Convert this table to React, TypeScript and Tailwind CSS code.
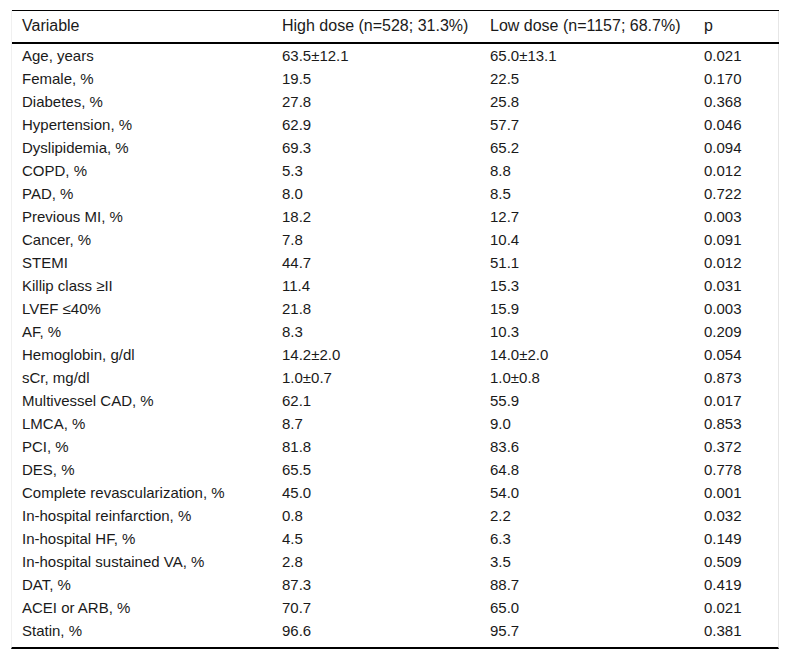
const rows: [string, string, string, string][] = [
  ['Age, years', '63.5±12.1', '65.0±13.1', '0.021'],
  ['Female, %', '19.5', '22.5', '0.170'],
  ['Diabetes, %', '27.8', '25.8', '0.368'],
  ['Hypertension, %', '62.9', '57.7', '0.046'],
  ['Dyslipidemia, %', '69.3', '65.2', '0.094'],
  ['COPD, %', '5.3', '8.8', '0.012'],
  ['PAD, %', '8.0', '8.5', '0.722'],
  ['Previous MI, %', '18.2', '12.7', '0.003'],
  ['Cancer, %', '7.8', '10.4', '0.091'],
  ['STEMI', '44.7', '51.1', '0.012'],
  ['Killip class ≥II', '11.4', '15.3', '0.031'],
  ['LVEF ≤40%', '21.8', '15.9', '0.003'],
  ['AF, %', '8.3', '10.3', '0.209'],
  ['Hemoglobin, g/dl', '14.2±2.0', '14.0±2.0', '0.054'],
  ['sCr, mg/dl', '1.0±0.7', '1.0±0.8', '0.873'],
  ['Multivessel CAD, %', '62.1', '55.9', '0.017'],
  ['LMCA, %', '8.7', '9.0', '0.853'],
  ['PCI, %', '81.8', '83.6', '0.372'],
  ['DES, %', '65.5', '64.8', '0.778'],
  ['Complete revascularization, %', '45.0', '54.0', '0.001'],
  ['In-hospital reinfarction, %', '0.8', '2.2', '0.032'],
  ['In-hospital HF, %', '4.5', '6.3', '0.149'],
  ['In-hospital sustained VA, %', '2.8', '3.5', '0.509'],
  ['DAT, %', '87.3', '88.7', '0.419'],
  ['ACEI or ARB, %', '70.7', '65.0', '0.021'],
  ['Statin, %', '96.6', '95.7', '0.381'],
];

export default function App() {
  return (
    <div className="min-h-screen bg-white pt-[10px] pl-[11px]" style={{ fontFamily: '"Liberation Sans", Arial, sans-serif' }}>
      <div className="w-[768px] border-r border-[#e6e6e6] border-l pb-[5px] border-b-2 border-b-black border-l-[#f0f0f0]">
        <table className="w-[767px] table-fixed border-collapse text-[15px] text-[#1a1a1a]">
          <colgroup>
            <col className="w-[260px]" />
            <col className="w-[208px]" />
            <col className="w-[214px]" />
            <col className="w-[85px]" />
          </colgroup>
          <thead>
            <tr className="border-t border-black border-b-2 border-b-black text-[16px]">
              <th className="h-[32px] pl-[10px] text-left font-normal">Variable</th>
              <th className="pl-[10px] text-left font-normal whitespace-nowrap">High dose (n=528; 31.3%)</th>
              <th className="pl-[10px] text-left font-normal whitespace-nowrap">Low dose (n=1157; 68.7%)</th>
              <th className="pl-[10px] text-left font-normal">p</th>
            </tr>
          </thead>
          <tbody>
            {rows.map((r) => (
              <tr key={r[0]} className="h-[23px]">
                {r.map((c, i) => (
                  <td key={i} className="py-0 pl-[10px] leading-[23px] whitespace-nowrap">{c}</td>
                ))}
              </tr>
            ))}
          </tbody>
        </table>
      </div>
    </div>
  );
}
